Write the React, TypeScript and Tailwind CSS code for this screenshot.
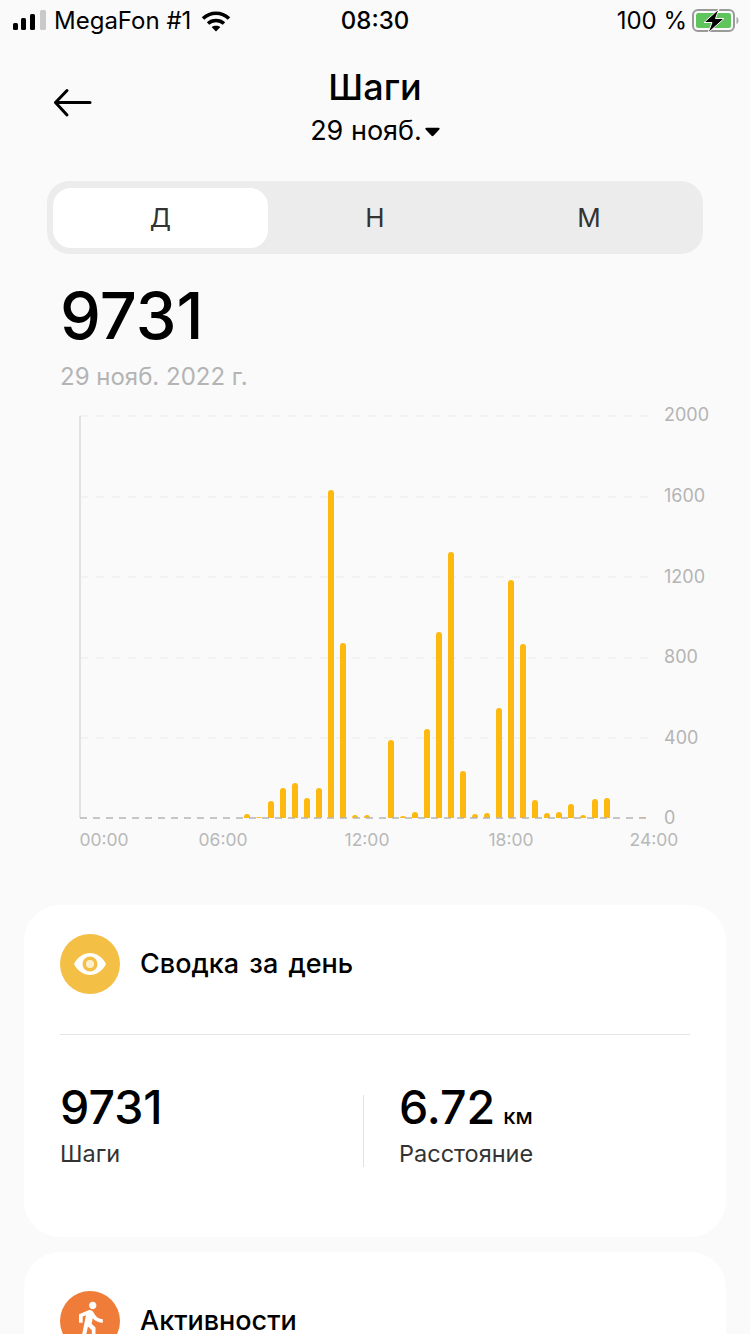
import { MdDirectionsWalk } from "react-icons/md";

// Высота столбика в пикселях для каждого получаса (0 = нет шагов).
const BARS: Record<number, number> = {
  14: 4, 15: 1, 16: 17, 17: 30, 18: 35, 19: 20, 20: 30, 21: 328, 22: 175, 23: 3, 24: 3,
  26: 78, 27: 2, 28: 6, 29: 89, 30: 186, 31: 266, 32: 47, 33: 4, 34: 5, 35: 110, 36: 238,
  37: 174, 38: 18, 39: 5, 40: 6, 41: 14, 42: 3, 43: 19, 44: 20, 47: 1,
};

const Y_LABELS: [string, number][] = [
  ["2000", 0], ["1600", 81], ["1200", 162], ["800", 242], ["400", 323], ["0", 403],
];
const X_LABELS: [string, number][] = [
  ["00:00", 24], ["06:00", 143], ["12:00", 287], ["18:00", 431], ["24:00", 574],
];

function StatusBar() {
  return (
    <div className="relative flex h-[42px] items-center text-[24px] text-black">
      <svg width="36" height="22" viewBox="0 0 36 22" className="ml-[12px]">
        <rect x="1" y="13" width="5" height="7" rx="1.5" fill="#000" />
        <rect x="9" y="8" width="5" height="12" rx="1.5" fill="#000" />
        <rect x="18" y="4" width="5" height="16" rx="1.5" fill="#000" />
        <rect x="28" y="0" width="6" height="20" rx="1.5" fill="#c9c9c9" />
      </svg>
      <span className="ml-[6px] leading-none">MegaFon #1</span>
      <svg width="30" height="22" viewBox="0 0 30 22" className="ml-[10px]" fill="none" stroke="#000" strokeWidth="3.6">
        <path d="M2 8.5C9.5 1.5 20.5 1.5 28 8.5" />
        <path d="M7 13.5C11.5 9.5 18.5 9.5 23 13.5" />
        <path d="M15 21.5L10.6 17C13 15.2 17 15.2 19.4 17Z" fill="#000" stroke="none" />
      </svg>
      <span className="absolute left-0 right-0 text-center font-medium leading-none">08:30</span>
      <span className="ml-auto leading-none">100 %</span>
      <svg width="48" height="24" viewBox="0 0 48 24" className="ml-[5px] mr-[10px]">
        <rect x="1" y="1" width="41" height="21" rx="5" fill="none" stroke="#9a9a9a" strokeWidth="2" />
        <rect x="4" y="4" width="35" height="15" rx="2.5" fill="#5fc45c" />
        <path d="M44.5 8v7c1.500-.5 2-2 2-3.500s-.5-3-2-3.500Z" fill="#aaa" />
        <path d="M27 0 L12 13.500 H20 L16 24 L32 9.500 H23.500 Z" fill="#000" stroke="#fafafa" strokeWidth="1" />
      </svg>
    </div>
  );
}

function Header() {
  return (
    <div className="relative mt-[22px] flex flex-col items-center">
      <svg width="40" height="30" viewBox="0 0 40 30" className="absolute left-[53px] top-[24px]" fill="none" stroke="#000" strokeWidth="3" strokeLinecap="round" strokeLinejoin="round">
        <path d="M37 14.500H3" />
        <path d="M14 2.500L2.500 14.500L14 27" />
      </svg>
      <h1 className="text-[36px] font-medium leading-[46px] text-black">Шаги</h1>
      <div className="mt-[5px] flex items-center text-[27px] leading-[32px] text-black">
        29 нояб.
        <svg width="15" height="10" viewBox="0 0 16 10" className="ml-[3px] mt-[2px]">
          <path d="M1.500 0.500H14.500C15.500 .5 16 1.500 15.300 2.300L9 9C8.400 9.700 7.600 9.700 7 9L.7 2.300C0 1.500.5.5 1.500.5Z" fill="#000" />
        </svg>
      </div>
    </div>
  );
}

function Tabs() {
  return (
    <div className="mx-[47px] mt-[34px] flex h-[73px] items-center rounded-[22px] bg-[#ececec] p-[6px] text-[26px] text-[#333]">
      <div className="flex h-[60px] w-[215px] items-center justify-center rounded-[18px] bg-white">Д</div>
      <div className="flex h-[60px] w-[214px] items-center justify-center">Н</div>
      <div className="flex h-[60px] w-[214px] items-center justify-center">М</div>
    </div>
  );
}

function Chart() {
  return (
    <svg width="660" height="457" viewBox="0 -12 660 457" className="ml-[70px] mt-[10px] block" fontFamily="Inter, sans-serif">
      {[0, 81, 161, 242, 322].map((y) => (
        <line key={y} x1="10" x2="580" y1={y + 2} y2={y + 2} stroke="#ebebeb" strokeWidth="1" strokeDasharray="8 8" />
      ))}
      <line x1="10" x2="10" y1="2" y2="404" stroke="#e2e2e2" strokeWidth="2" />
      {Object.entries(BARS).map(([slot, h]) => (
        <path
          key={slot}
          d={`M${9 + 12 * Number(slot) - 3} 404v${-Math.max(h - 3, 0)}a3 ${Math.min(h, 3)} 0 0 1 6 0v${Math.max(h - 3, 0)}z`}
          fill="#fdb90f"
        />
      ))}
      <line x1="10" x2="580" y1="404" y2="404" stroke="#b5b5b5" strokeWidth="1.500" strokeDasharray="7 6" />
      {Y_LABELS.map(([label, y]) => (
        <text key={label} x="594" y={y + 7} fontSize="18" fill="#b4b4b4">{label}</text>
      ))}
      {X_LABELS.map(([label, x]) => (
        <text key={label} x={x + 10} y="432" fontSize="17.5" fill="#b8b8b8" textAnchor="middle">{label}</text>
      ))}
    </svg>
  );
}

function Summary() {
  return (
    <section className="mx-[24px] mt-[46px] h-[332px] rounded-[36px] bg-white px-[36px] pt-[29px]">
      <div className="flex items-center gap-[20px]">
        <div className="flex h-[60px] w-[60px] items-center justify-center rounded-full bg-[#f4bf45]">
          <svg width="34" height="24" viewBox="0 0 34 24">
            <path d="M1 12C5 4.500 11 1 17 1s12 3.500 16 11c-4 7.500-10 11-16 11S5 19.500 1 12Z" fill="#fff" />
            <circle cx="17" cy="12" r="7.500" fill="#f4bf45" />
            <circle cx="17" cy="12" r="4" fill="#fff" opacity="0.75" />
          </svg>
        </div>
        <h2 className="text-[27px] font-medium text-black [word-spacing:3px]">Сводка за день</h2>
      </div>
      <div className="mt-[40px] h-px bg-[#e5e5e5]" />
      <div className="mt-[48px] flex">
        <div className="w-[303px]">
          <div className="text-[46.5px] font-medium leading-[48px] text-black">9731</div>
          <div className="mt-[8px] text-[23.5px] leading-[30px] text-[#333]">Шаги</div>
        </div>
        <div className="mt-[12px] h-[72px] w-px bg-[#e2e2e2]" />
        <div className="ml-[35px]">
          <div className="text-[46.5px] font-medium leading-[48px] text-black">
            6.72<span className="ml-[8px] text-[22px] leading-none">км</span>
          </div>
          <div className="mt-[8px] text-[23.5px] leading-[30px] text-[#333]">Расстояние</div>
        </div>
      </div>
    </section>
  );
}

function Activities() {
  return (
    <section className="mx-[24px] mt-[15px] h-[200px] rounded-[36px] bg-white px-[36px] pt-[39px]">
      <div className="flex items-center gap-[20px]">
        <div className="flex h-[60px] w-[60px] items-center justify-center rounded-full bg-[#ef7c38]">
          <MdDirectionsWalk size={44} color="#fff" />
        </div>
        <h2 className="text-[27px] font-medium text-black">Активности</h2>
      </div>
    </section>
  );
}

export default function App() {
  return (
    <div className="h-[1334px] w-[750px] overflow-hidden bg-[#fafafa] font-['Inter',sans-serif]">
      <StatusBar />
      <Header />
      <Tabs />
      <div className="ml-[60px] mt-[24px] text-[65px] font-medium leading-[76px] text-black">9731</div>
      <div className="ml-[60px] mt-[8px] text-[24px] leading-[30px] text-[#b4b4b4]">29 нояб. 2022 г.</div>
      <Chart />
      <Summary />
      <Activities />
    </div>
  );
}
